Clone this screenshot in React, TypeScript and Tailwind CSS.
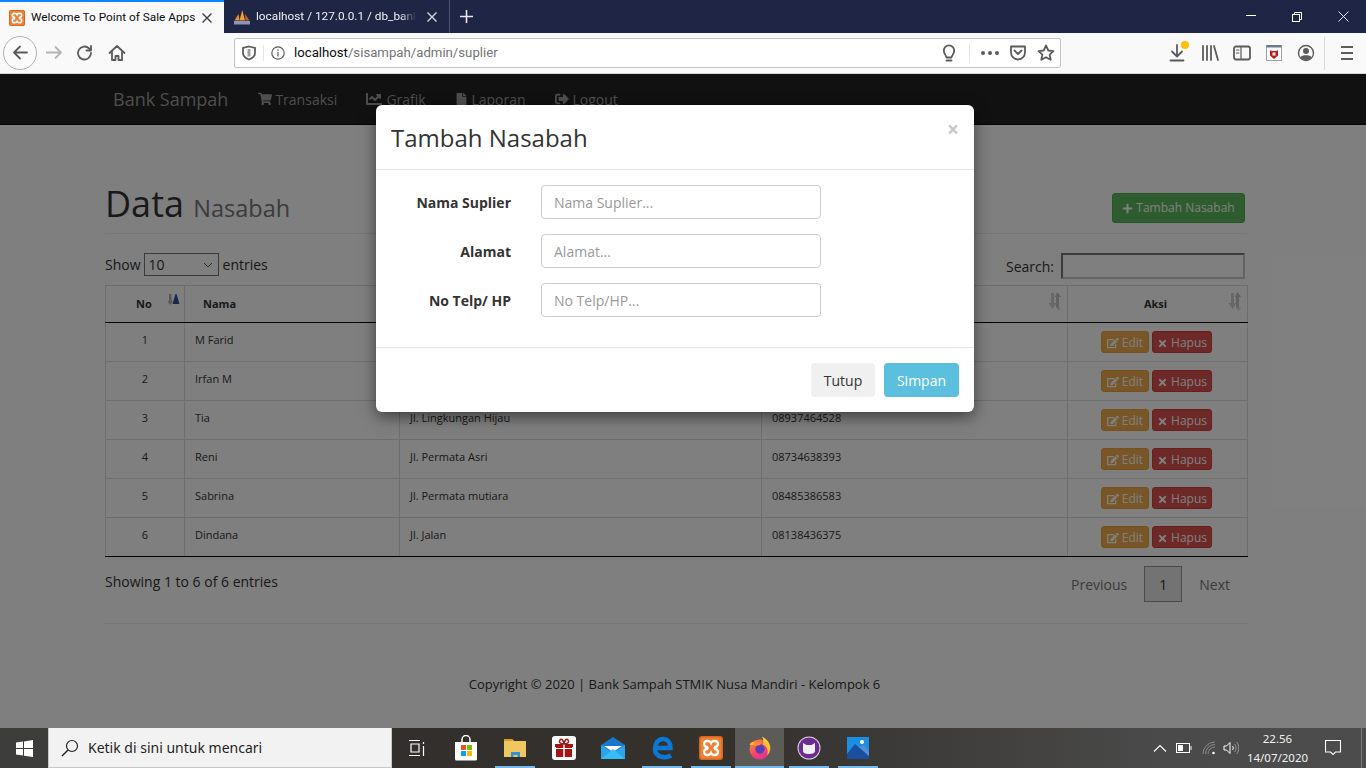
import { FaChartLine, FaEdit, FaFile, FaPlus, FaShoppingCart, FaSignOutAlt, FaTimes } from "react-icons/fa";

const rows = [
  { no: 1, nama: "M Farid", alamat: "", telp: "" },
  { no: 2, nama: "Irfan M", alamat: "", telp: "" },
  { no: 3, nama: "Tia", alamat: "Jl. Lingkungan Hijau", telp: "08937464528" },
  { no: 4, nama: "Reni", alamat: "Jl. Permata Asri", telp: "08734638393" },
  { no: 5, nama: "Sabrina", alamat: "Jl. Permata mutiara", telp: "08485386583" },
  { no: 6, nama: "Dindana", alamat: "Jl. Jalan", telp: "08138436375" },
];

const fields = [
  { label: "Nama Suplier", placeholder: "Nama Suplier..." },
  { label: "Alamat", placeholder: "Alamat..." },
  { label: "No Telp/ HP", placeholder: "No Telp/HP..." },
];

function XamppIcon({ size = 16 }: { size?: number }) {
  return (
    <svg width={size} height={size} viewBox="0 0 24 24">
      <rect width="24" height="24" rx="3" fill="#d9661f" />
      <rect x="1.500" y="1.500" width="21" height="21" rx="2" fill="#ee8033" />
      <path d="M8 5h1c1.500 0 2.500 1 3 2 .5-1 1.500-2 3-2h1a3 3 0 0 1 3 3 3 3 0 0 1-3 3l-.5 1 .5 1a3 3 0 0 1 3 3 3 3 0 0 1-3 3h-1c-1.500 0-2.500-1-3-2-.5 1-1.500 2-3 2H8a3 3 0 0 1-3-3 3 3 0 0 1 3-3l.5-1-.5-1a3 3 0 0 1-3-3 3 3 0 0 1 3-3z" fill="none" stroke="#fff" strokeWidth="2.400" />
    </svg>
  );
}

function PmaIcon() {
  return (
    <svg width="16" height="16" viewBox="0 0 16 16">
      <path d="M.5 11.500 4.500 5l1 6.500z" fill="#e8912d" />
      <path d="M5.500 11.500 8.300 1l2.700 10.500z" fill="#f0a030" />
      <path d="M11.500 11.500 11 5l4.500 6.500z" fill="#c9661d" />
      <rect x="0" y="12" width="16" height="3.500" fill="#8a95b8" />
    </svg>
  );
}

function SortIcon({ active = false }: { active?: boolean }) {
  if (active) {
    return (
      <svg width="13" height="13" viewBox="0 0 13 13" className="absolute top-[7px] left-[61px]">
        <path d="M2 1h2.500v7H6L3.200 12 .5 8H2z" fill="#b0b0b0" />
        <path d="M8.500 1 5.500 11h7L9.500 1z" fill="#3d4c9c" />
      </svg>
    );
  }
  return (
    <svg width="14" height="19" viewBox="0 0 14 19" className="absolute top-[6px] right-[5px]">
      <path d="M3 1h3v10h2.500L4.500 17 .5 11H3z" fill="#d0d0d0" />
      <path d="M9.500 0 6.500 5H8v11h3V5h2z" fill="#c4c4c4" />
      <path d="M8 15h5l-2.500 4z" fill="#d8d8d8" />
    </svg>
  );
}

function ToolbarIcon({ children, w = 20 }: { children: React.ReactNode; w?: number }) {
  return (
    <svg width={w} height="20" viewBox={`0 0 ${w} 20`} fill="none" stroke="#5b5b5c" strokeWidth="1.800" strokeLinecap="round" strokeLinejoin="round">
      {children}
    </svg>
  );
}

function BrowserChrome() {
  return (
    <div className="shrink-0 font-['Roboto',sans-serif]">
      <div className="flex h-[33px] items-stretch bg-[#1f2544] text-[11.8px]">
        <div className="flex w-[224px] items-center border-t-2 border-[#0a84ff] bg-[#f9f9fa] pr-[11px] pl-[9px] text-[#0c0c0d]">
          <XamppIcon />
          <span className="ml-[6px] flex-1 whitespace-nowrap">Welcome To Point of Sale Apps</span>
          <svg width="12" height="12" viewBox="0 0 12 12" stroke="#3d3d3f" strokeWidth="1.400"><path d="M1.500 1.500l9 9m0-9l-9 9" /></svg>
        </div>
        <div className="flex w-[226px] items-center border-r border-[#50556e] pr-[10px] pl-[10px] text-[#f0f0f4]">
          <PmaIcon />
          <span className="ml-[6px] w-[160px] whitespace-nowrap [mask-image:linear-gradient(90deg,#000_90%,transparent)]">localhost / 127.0.0.1 / db_bank_</span>
          <svg className="ml-[10px]" width="12" height="12" viewBox="0 0 12 12" stroke="#d6d6dc" strokeWidth="1.400"><path d="M1.500 1.500l9 9m0-9l-9 9" /></svg>
        </div>
        <div className="flex w-[33px] items-center justify-center">
          <svg width="15" height="15" viewBox="0 0 15 15" stroke="#e8e8ee" strokeWidth="1.600"><path d="M7.500 1v13M1 7.500h13" /></svg>
        </div>
        <div className="flex-1" />
        <div className="flex items-center">
          <div className="flex w-[46px] justify-center pb-[2px]"><div className="h-px w-[10px] bg-white" /></div>
          <div className="flex w-[46px] justify-center">
            <svg width="10" height="10" viewBox="0 0 10 10" fill="none" stroke="#fff"><rect x=".5" y="2.500" width="7" height="7" /><path d="M2.500 2.500v-2h7v7h-2" /></svg>
          </div>
          <div className="flex w-[46px] justify-center">
            <svg width="11" height="11" viewBox="0 0 11 11" stroke="#fff" strokeWidth=".9"><path d="M.5.500l10 10m0-10l-10 10" /></svg>
          </div>
        </div>
      </div>
      <div className="flex h-[41px] items-center border-b border-[#d6d6d7] bg-[#f9f9fa]">
        <div className="ml-[3px] flex h-[34px] w-[34px] items-center justify-center rounded-full border border-[#b1b1b3] bg-[#fbfbfb]">
          <ToolbarIcon w={18}><path d="M16 9.500H3M9 3.500l-6 6 6 6" /></ToolbarIcon>
        </div>
        <div className="ml-[7px] flex w-[20px] justify-center">
          <svg width="18" height="20" viewBox="0 0 18 20" fill="none" stroke="#b4b4b5" strokeWidth="1.800"><path d="M1 9.500h15M10 3.500l6 6-6 6" /></svg>
        </div>
        <div className="ml-[11px] flex w-[20px] justify-center">
          <ToolbarIcon><path d="M16 10a6.500 6.500 0 1 1-2-4.700L16 7M16 3v4.500h-4.500" /></ToolbarIcon>
        </div>
        <div className="ml-[12px] flex w-[20px] justify-center">
          <ToolbarIcon><path d="M2.500 10 10 3l7.500 7M5 8.500V17h3.500v-4h3v4H15V8.500" /></ToolbarIcon>
        </div>
        <div className="ml-[107px] flex h-[30px] w-[827px] items-center rounded-[2px] border border-[#c4c4c5] bg-white">
          <div className="flex w-[29px] justify-center border-r border-[#e6e6e6]">
            <svg width="16" height="16" viewBox="0 0 16 16" fill="none" stroke="#5b5b5c" strokeWidth="1.800"><path d="M8 1.500 14 3v5c0 3.500-3 5.500-6 6.500C5 13.500 2 11.500 2 8V3z" /><path d="M8 4v7.500" strokeWidth="3" opacity=".6" /></svg>
          </div>
          <svg className="ml-[7px]" width="14" height="14" viewBox="0 0 14 14" fill="none" stroke="#5b5b5c" strokeWidth="1.200"><circle cx="7" cy="7" r="6.200" /><path d="M7 6v4.500M7 3.300v1.400" /></svg>
          <span className="ml-[9px] text-[13.2px] whitespace-nowrap text-[#0c0c0d]">localhost<span className="text-[#737373]">/sisampah/admin/suplier</span></span>
          <div className="flex-1" />
          <ToolbarIcon w={18}><path d="M6.500 14.500C6 12 3.800 10.500 3.800 7.500a5.200 5.200 0 1 1 10.400 0c0 3-2.200 4.500-2.700 7zM6.500 17.500h5" /></ToolbarIcon>
          <div className="mx-[11px] h-[20px] w-px bg-[#e6e6e6]" />
          <div className="flex gap-[3px]">
            <span className="h-[4px] w-[4px] rounded-full bg-[#5b5b5c]" />
            <span className="h-[4px] w-[4px] rounded-full bg-[#5b5b5c]" />
            <span className="h-[4px] w-[4px] rounded-full bg-[#5b5b5c]" />
          </div>
          <div className="ml-[10px] flex">
            <ToolbarIcon w={18}><path d="M2 3.500h14v6a7 7 0 0 1-14 0zM5.500 7.500 9 11l3.500-3.500" /></ToolbarIcon>
          </div>
          <div className="mr-[4px] ml-[9px] flex">
            <ToolbarIcon><path d="M10 2.500l2.300 5 5.200.6-3.900 3.500 1.100 5.200L10 14.200l-4.700 2.600 1.100-5.200-3.900-3.500 5.200-.6z" /></ToolbarIcon>
          </div>
        </div>
        <div className="flex-1" />
        <div className="relative mr-[13px]">
          <ToolbarIcon><path d="M10 2v11M5 8.500l5 5 5-5M3.500 17.500h13" /></ToolbarIcon>
          <span className="absolute top-[-2px] right-[-2px] h-[8px] w-[8px] rounded-full bg-[#ffbf00]" />
        </div>
        <div className="mr-[12px]">
          <ToolbarIcon><path d="M3 3v14M7 3v14M11 3v14M14 3l4 14" /></ToolbarIcon>
        </div>
        <div className="mr-[12px]">
          <ToolbarIcon><rect x="2" y="3.500" width="16" height="13" rx="2" /><path d="M9 3.500v13M4.500 7H7M4.500 10H7" strokeWidth="1.200" /></ToolbarIcon>
        </div>
        <div className="mr-[12px]">
          <svg width="20" height="20" viewBox="0 0 20 20"><rect x="2.500" y="2.500" width="15" height="15" fill="#fff" stroke="#a0a0a0" /><rect x="2.500" y="2" width="15" height="2.500" fill="#6b7b8c" /><path d="M6 7l1.500 1h5L14 7v5.500L10 16l-4-3.500z" fill="#c01818" /><rect x="8.500" y="9.500" width="3" height="3" fill="#fff" /></svg>
        </div>
        <div className="mr-[8px]">
          <ToolbarIcon><circle cx="10" cy="10" r="7.500" strokeWidth="1.400" /><circle cx="10" cy="8" r="3" fill="#5b5b5c" stroke="none" /><path d="M4.500 14c1.500-2.500 9.500-2.500 11 0-1 2-3 3-5.500 3s-4.500-1-5.500-3z" fill="#5b5b5c" stroke="none" /></ToolbarIcon>
        </div>
        <div className="h-[33px] w-px bg-[#d9d9da]" />
        <div className="mr-[12px] ml-[15px]">
          <ToolbarIcon w={14}><path d="M1 4h12M1 10h12M1 16h12" strokeWidth="2" strokeLinecap="butt" /></ToolbarIcon>
        </div>
      </div>
    </div>
  );
}

function PageContent() {
  return (
    <div className="h-full bg-white text-[#333]">
      <nav className="flex h-[51px] items-center border-b border-[#080808] bg-[#222] pl-[113px] text-[#9d9d9d]">
        <span className="text-[18px]">Bank Sampah</span>
        <div className="ml-[30px] flex text-[14px]">
          <span className="flex w-[108px] items-center gap-[3px]"><FaShoppingCart className="text-[14px]" /> Transaksi</span>
          <span className="flex w-[89px] items-center gap-[4px]"><FaChartLine className="text-[16px]" /> Grafik</span>
          <span className="flex w-[100px] items-center gap-[3px]"><FaFile className="text-[13px]" /> Laporan</span>
          <span className="flex items-center gap-[3px]"><FaSignOutAlt className="text-[14px]" /> Logout</span>
        </div>
      </nav>
      <div className="ml-[105px] w-[1142px] pt-[59px]">
        <div className="flex h-[50px] items-start justify-between border-b border-[#eee] pr-[2px]">
          <h1 className="text-[36px] leading-[40px] whitespace-nowrap">
            Data <small className="text-[23.5px] text-[#777]">Nasabah</small>
          </h1>
          <button className="mt-[9px] flex h-[30px] w-[133px] items-center justify-center gap-[3px] rounded-[3px] border border-[#4cae4c] bg-[#5cb85c] text-[12px] text-white">
            <FaPlus className="text-[11px]" /> Tambah Nasabah
          </button>
        </div>
        <div className="mt-[19px] flex h-[32px] items-start justify-between text-[14px]">
          <div className="flex items-center whitespace-nowrap">
            Show
            <div className="mr-[4px] ml-[3px] flex h-[23px] w-[75px] items-center justify-between border border-[#767676] pr-[5px] pl-[4px]">
              10
              <svg width="10" height="6" viewBox="0 0 10 6" fill="none" stroke="#555"><path d="M1 1l4 4 4-4" /></svg>
            </div>
            entries
          </div>
          <div className="flex items-center gap-[7px] pr-[2px]">
            Search:
            <div className="h-[26px] w-[184px] border-2 border-t-[#767676] border-r-[#c8c8c8] border-b-[#c8c8c8] border-l-[#767676]" />
          </div>
        </div>
        <table className="w-[1142px] table-fixed border-collapse text-[11px]">
          <colgroup>
            <col className="w-[79px]" />
            <col className="w-[215px]" />
            <col className="w-[362px]" />
            <col className="w-[306px]" />
            <col className="w-[180px]" />
          </colgroup>
          <thead>
            <tr className="h-[37px] font-bold">
              <th className="relative border border-[#ddd] border-b-black pt-px pr-[2px] text-center">No<SortIcon active /></th>
              <th className="relative border border-[#ddd] border-b-black pt-px pl-[18px] text-left">Nama<SortIcon /></th>
              <th className="relative border border-[#ddd] border-b-black"><SortIcon /></th>
              <th className="relative border border-[#ddd] border-b-black"><SortIcon /></th>
              <th className="relative border border-[#ddd] border-b-black pt-px pr-[4px] text-center">Aksi<SortIcon /></th>
            </tr>
          </thead>
          <tbody>
            {rows.map((row, i) => {
              const cell = i === rows.length - 1 ? "border border-[#ddd] border-b-black" : "border border-[#ddd]";
              return (
                <tr key={row.no} className="h-[39px]">
                  <td className={`${cell} pb-[4px] text-center`}>{row.no}</td>
                  <td className={`${cell} pb-[4px] pl-[10px]`}>{row.nama}</td>
                  <td className={`${cell} pb-[4px] pl-[10px]`}>{row.alamat}</td>
                  <td className={`${cell} pb-[4px] pl-[10px]`}>{row.telp}</td>
                  <td className={cell}>
                    <div className="flex justify-center gap-[3px] pr-[2px] text-[12px] text-white">
                      <span className="flex h-[22px] w-[48px] items-center justify-center gap-[3px] rounded-[3px] border border-[#eea236] bg-[#f0ad4e] pt-[2px]"><FaEdit className="text-[12px]" /> Edit</span>
                      <span className="flex h-[22px] w-[60px] items-center justify-center gap-[3px] rounded-[3px] border border-[#d43f3a] bg-[#d9534f] pt-[2px]"><FaTimes className="text-[11px]" /> Hapus</span>
                    </div>
                  </td>
                </tr>
              );
            })}
          </tbody>
        </table>
        <div className="flex h-[46px] items-start justify-between">
          <span className="mt-[14px] text-[14px]">Showing 1 to 6 of 6 entries</span>
          <div className="mt-[9px] mr-[1px] flex items-center text-[14px] text-[#777]">
            <span className="pr-[17px]">Previous</span>
            <span className="flex h-[36px] w-[38px] items-center justify-center border border-[#979797] bg-[#e6e6e6] text-[#333]">1</span>
            <span className="pr-[16px] pl-[17px]">Next</span>
          </div>
        </div>
        <div className="mt-[20px] border-t border-[#eee] pt-[51px] pr-[3px] text-center text-[13px]">
          Copyright © 2020 | Bank Sampah STMIK Nusa Mandiri - Kelompok 6
        </div>
      </div>
    </div>
  );
}

function ModalDialog() {
  return (
    <div className="absolute top-[31px] left-[376px] h-[307px] w-[598px] rounded-[6px] bg-white text-[#333] shadow-[0_5px_15px_rgba(0,0,0,0.5)]">
      <div className="relative h-[65px] border-b border-[#e5e5e5] pt-[15px] pl-[15px] text-[24px] leading-[36px]">
        Tambah Nasabah
        <span className="absolute top-[11px] right-[15px] text-[21px] leading-[26px] font-bold text-[#c8c8c8]">×</span>
      </div>
      <div className="flex h-[178px] flex-col gap-[15px] border-b border-[#e5e5e5] pt-[15px]">
        {fields.map((f) => (
          <div key={f.label} className="flex items-center">
            <label className="w-[135px] text-right text-[14px] font-bold">{f.label}</label>
            <div className="ml-[30px] flex h-[34px] w-[280px] items-center rounded-[4px] border border-[#ccc] pl-[12px] text-[14px] text-[#999]">
              {f.placeholder}
            </div>
          </div>
        ))}
      </div>
      <div className="flex justify-end gap-[9px] pt-[15px] pr-[15px] text-[14px]">
        <span className="flex h-[34px] w-[64px] items-center justify-center rounded-[4px] bg-[#f0f0f0]">Tutup</span>
        <span className="flex h-[34px] w-[75px] items-center justify-center rounded-[4px] bg-[#5bc0de] text-white">Simpan</span>
      </div>
    </div>
  );
}

function TaskApp({ children, running, active = false }: { children: React.ReactNode; running: boolean; active?: boolean }) {
  return (
    <div className={`relative flex w-[49px] items-center justify-center ${active ? "bg-[#5d5b57]" : ""}`}>
      {children}
      {running && <span className={`absolute bottom-0 h-[2px] bg-[#76b9ed] ${active ? "right-0 left-0" : "right-[4px] left-[5px]"}`} />}
    </div>
  );
}

function Taskbar() {
  return (
    <div className="flex h-[40px] shrink-0 items-stretch bg-[linear-gradient(90deg,#2e2c29_0%,#35322e_55%,#4a4a4a_85%,#4c4c4c_100%)] font-['Noto_Sans',sans-serif]">
      <div className="flex w-[48px] items-center justify-center bg-[#3d3d3c]">
        <svg width="17" height="17" viewBox="0 0 17 17" fill="#fff"><path d="M0 2.500 7 1.500v6.500H0zM8 1.400 17 0v8H8zM0 9h7v6.500L0 14.500zM8 9h9v8l-9-1.300z" /></svg>
      </div>
      <div className="flex w-[344px] items-center border border-t-0 border-[#c8c8c8] bg-[#f2f2f2] pl-[12px] text-[14px] text-[#1f1f1f]">
        <svg width="18" height="18" viewBox="0 0 18 18" fill="none" stroke="#222" strokeWidth="1.200"><circle cx="11" cy="7" r="5.500" /><path d="M7 11l-6 6" strokeWidth="1.500" /></svg>
        <span className="ml-[9px]">Ketik di sini untuk mencari</span>
      </div>
      <div className="flex w-[49px] items-center justify-center">
        <svg width="18" height="18" viewBox="0 0 18 18" fill="none" stroke="#fff" strokeWidth="1.200"><path d="M1 1.500h11M3 5h8v8H3zM1 16.500h11M15.500 3v2M15.500 7v10" /></svg>
      </div>
      <TaskApp running={false}>
        <svg width="26" height="26" viewBox="0 0 26 26"><path d="M9 7V4.500a4 4 0 0 1 8 0V7" fill="none" stroke="#fff" strokeWidth="1.500" /><path d="M2 7h22v17a1.500 1.500 0 0 1-1.500 1.500h-19A1.500 1.500 0 0 1 2 24z" fill="#fff" /><rect x="8" y="10" width="5" height="5" fill="#f25022" /><rect x="14" y="10" width="5" height="5" fill="#7fba00" /><rect x="8" y="16" width="5" height="5" fill="#00a4ef" /><rect x="14" y="16" width="5" height="5" fill="#ffb900" /></svg>
      </TaskApp>
      <TaskApp running={true}>
        <svg width="24" height="22" viewBox="0 0 24 22"><path d="M1 2h8l2 2h12v16H1z" fill="#f0c75e" /><path d="M1 2h8l2 2H1z" fill="#d9a021" /><path d="M8 15h9v5h-2.500v-2h-4v2H8z" fill="#2b95d6" /></svg>
      </TaskApp>
      <TaskApp running={false}>
        <svg width="24" height="24" viewBox="0 0 24 24"><rect width="24" height="24" rx="3" fill="#fff" /><rect x="4" y="11" width="16" height="10" fill="#a31515" /><rect x="3" y="8" width="18" height="3" fill="#a31515" /><path d="M12 8V21" stroke="#fff" strokeWidth="1.500" /><path d="M4 12.500h16" stroke="#fff" /><path d="M12 8C8 8 6.500 6 8 4s4 1 4 4c0-3 2.500-6 4-4s0 4-4 4z" fill="none" stroke="#a31515" strokeWidth="1.500" /></svg>
      </TaskApp>
      <TaskApp running={false}>
        <svg width="24" height="24" viewBox="0 0 24 24"><path d="M0 9 12 1l12 8v14H0z" fill="#1a76c9" /><path d="M0 9l12 8 12-8v14H0z" fill="#2ca5e8" /><path d="M3 10h18l-9 6z" fill="#fff" /><path d="M0 23 12 13l12 10z" fill="#35bdf5" /></svg>
      </TaskApp>
      <TaskApp running={true}>
        <svg width="22" height="24" viewBox="0 0 22 24" fill="none"><path d="M20 19.500c-5 3-16 2.500-16-6.500 0-5.500 3-10 8-10 5 0 7.500 4 7.500 9H5" stroke="#0a78d6" strokeWidth="4.500" /></svg>
      </TaskApp>
      <TaskApp running={true}>
        <XamppIcon size={24} />
      </TaskApp>
      <TaskApp running={true} active={true}>
        <svg width="24" height="24" viewBox="0 0 24 24"><defs><linearGradient id="ff" x1="0" y1="0" x2="0.700" y2="1"><stop offset="0" stopColor="#ff9a2e" /><stop offset=".6" stopColor="#f5456a" /><stop offset="1" stopColor="#e0309a" /></linearGradient></defs><circle cx="11.500" cy="13.500" r="10" fill="url(#ff)" /><path d="M14 .5c6 3 9.500 8.500 8 14-.5 2-1.500 3.500-3 5 2-5 0-9-4-11 .5-3 .5-5.500-1-8z" fill="#ffc42e" /><path d="M1.500 9c.5-2 2.500-3.500 5-3.500-.5 1-.5 2 .5 3.500z" fill="#ffb02e" /><circle cx="12" cy="13" r="4.700" fill="#5b3bb8" /><path d="M6 8c2-2 6-2.500 8-1.500L12 9 7.500 10z" fill="#ff8a2e" /></svg>
      </TaskApp>
      <TaskApp running={true}>
        <svg width="24" height="24" viewBox="0 0 24 24"><circle cx="12" cy="12" r="11.500" fill="#d8d4de" /><circle cx="12" cy="12" r="10.500" fill="#6a2c91" /><path d="M6 7l3.500 2h5L18 7v8c0 2-2 3-6 3s-6-1-6-3z" fill="#f0eef2" /></svg>
      </TaskApp>
      <TaskApp running={true}>
        <svg width="22" height="22" viewBox="0 0 22 22"><rect width="22" height="22" fill="#1c8fe0" /><circle cx="15" cy="5" r="2" fill="#fff" /><path d="M0 17 8 7l14 12v3H0z" fill="#1a4f9e" /><path d="M12 10l5-2 5 7v4z" fill="#5b8ad6" /></svg>
      </TaskApp>
      <div className="flex-1" />
      <div className="flex items-center text-white">
        <svg width="14" height="8" viewBox="0 0 14 8" fill="none" stroke="#fff" strokeWidth="1.100"><path d="M1 7.500 7 1.500l6 6" /></svg>
        <svg className="ml-[9px]" width="16" height="10" viewBox="0 0 16 10" fill="none" stroke="#fff"><rect x=".5" y=".5" width="13" height="9" /><rect x="2" y="2" width="5" height="6" fill="#fff" stroke="none" /><path d="M15 3v4" /></svg>
        <svg className="ml-[10px]" width="14" height="14" viewBox="0 0 14 14" fill="none" stroke="#8a8a8a"><path d="M1 13a12 12 0 0 1 12-12M3.500 13a9.500 9.500 0 0 1 9.500-9.500M6 13a7 7 0 0 1 7-7" /><circle cx="11.500" cy="12" r="1.300" fill="#fff" stroke="none" /></svg>
        <svg className="ml-[7px]" width="16" height="14" viewBox="0 0 16 14" fill="none" stroke="#fff"><path d="M1 5h2.500L7 1.500v11L3.500 9H1zM9.500 5c1 1 1 3 0 4" /><path d="M11.500 3c2 2 2 6 0 8M13.500 1c3 3 3 9 0 12" stroke="#9a9a9a" /></svg>
        <div className="ml-[4px] flex w-[69px] flex-col items-center text-[11.5px] leading-[19px] text-[#f0f0f0]">
          <span>22.56</span>
          <span>14/07/2020</span>
        </div>
        <svg className="ml-[13px]" width="17" height="16" viewBox="0 0 17 16" fill="none" stroke="#fff" strokeWidth="1.100"><path d="M.5.500h15v11.500h-5l-2.500 2.500-2.500-2.500h-5z" /></svg>
        <div className="ml-[19px] h-full w-[5px] border-l border-[#7a7a7a]" />
      </div>
    </div>
  );
}

export default function App() {
  return (
    <div className="flex h-[768px] w-[1366px] flex-col overflow-hidden font-['Open_Sans',sans-serif]">
      <BrowserChrome />
      <div className="relative min-h-0 flex-1 overflow-hidden">
        <PageContent />
        <div className="absolute inset-0 bg-black/50" />
        <ModalDialog />
      </div>
      <Taskbar />
    </div>
  );
}
